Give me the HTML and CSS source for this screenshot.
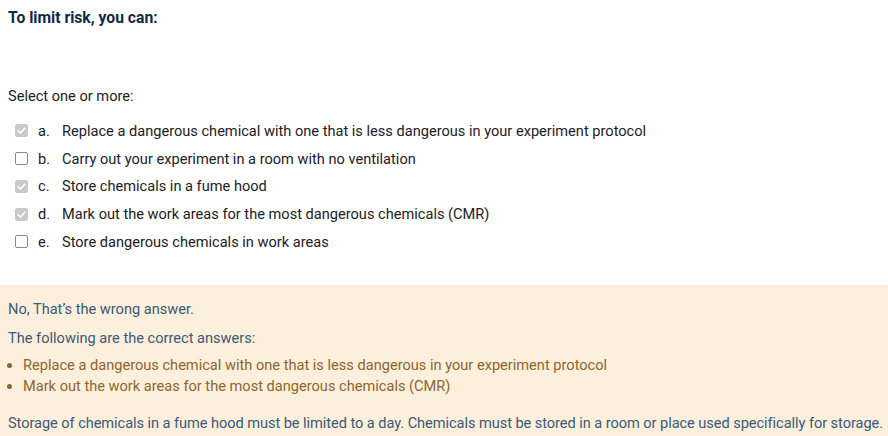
FILE: index.html
```html
<!DOCTYPE html>
<html lang="en">
<head>
<meta charset="utf-8">
<title>Question</title>
<link rel="stylesheet" href="styles.css">
</head>
<body>
<div class="que">
  <div class="formulation">
    <p class="qtext">To limit risk, you can:</p>
    <div class="ablock">
      <p class="prompt">Select one or more:</p>
      <div class="answer">
        <div class="opt"><span class="cb checked"><svg viewBox="0 0 13 13" width="13" height="13"><path d="M3.2 6.8 L5.5 9 L9.8 4.2" fill="none" stroke="#fff" stroke-width="1.6" stroke-linecap="round" stroke-linejoin="round"/></svg></span><span class="num">a.</span><span class="lbl">Replace a dangerous chemical with one that is less dangerous in your experiment protocol</span></div>
        <div class="opt"><span class="cb"></span><span class="num">b.</span><span class="lbl">Carry out your experiment in a room with no ventilation</span></div>
        <div class="opt"><span class="cb checked"><svg viewBox="0 0 13 13" width="13" height="13"><path d="M3.2 6.8 L5.5 9 L9.8 4.2" fill="none" stroke="#fff" stroke-width="1.6" stroke-linecap="round" stroke-linejoin="round"/></svg></span><span class="num">c.</span><span class="lbl">Store chemicals in a fume hood</span></div>
        <div class="opt"><span class="cb checked"><svg viewBox="0 0 13 13" width="13" height="13"><path d="M3.2 6.8 L5.5 9 L9.8 4.2" fill="none" stroke="#fff" stroke-width="1.6" stroke-linecap="round" stroke-linejoin="round"/></svg></span><span class="num">d.</span><span class="lbl">Mark out the work areas for the most dangerous chemicals (CMR)</span></div>
        <div class="opt"><span class="cb"></span><span class="num">e.</span><span class="lbl">Store dangerous chemicals in work areas</span></div>
      </div>
    </div>
  </div>
  <div class="outcome">
    <p class="fb">No, That’s the wrong answer.</p>
    <p class="fb">The following are the correct answers:</p>
    <ul class="right">
      <li>Replace a dangerous chemical with one that is less dangerous in your experiment protocol</li>
      <li>Mark out the work areas for the most dangerous chemicals (CMR)</li>
    </ul>
    <p class="fb general">Storage of chemicals in a fume hood must be limited to a day. Chemicals must be stored in a room or place used specifically for storage.</p>
  </div>
</div>
</body>
</html>
```

FILE: styles.css
```css
html, body {
  margin: 0;
  padding: 0;
  background: #fff;
}
body {
  font-family: Roboto, "Liberation Sans", sans-serif;
  font-size: 14.6px;
  color: #1d2125;
  width: 888px;
  height: 436px;
  overflow: hidden;
}
p { margin: 0; }
.formulation {
  padding: 0 8px;
}
.qtext {
  font-weight: 700;
  font-size: 15.7px;
  color: #0f2b46;
  padding-top: 8px;
  line-height: 20px;
}
.prompt {
  margin-top: 58px;
  line-height: 20px;
}
.answer {
  margin-top: 11px;
  padding-left: 7px;
  display: flex;
  flex-direction: column;
}
.opt {
  display: flex;
  align-items: center;
  height: 27.75px;
}
.cb {
  width: 13px;
  height: 13px;
  box-sizing: border-box;
  border: 1px solid #8a8a8a;
  border-radius: 2px;
  background: #fff;
  display: inline-flex;
  flex: none;
}
.cb.checked {
  border-color: #c9c9c9;
  background: #c9c9c9;
}
.cb svg { display: block; margin: -1px; }
.num {
  margin-left: 10px;
  width: 24px;
}
.outcome {
  margin-top: 29px;
  background: #fcefdc;
  padding: 14px 8px 10px;
  color: #3d5a78;
}
.fb {
  line-height: 20px;
  margin-bottom: 9px;
}
.right {
  margin: -2px 0 16px;
  padding-left: 15px;
  color: #8e662e;
  line-height: 21px;
}
.general {
  margin-bottom: 0;
  letter-spacing: -0.06px;
  white-space: nowrap;
}
```
